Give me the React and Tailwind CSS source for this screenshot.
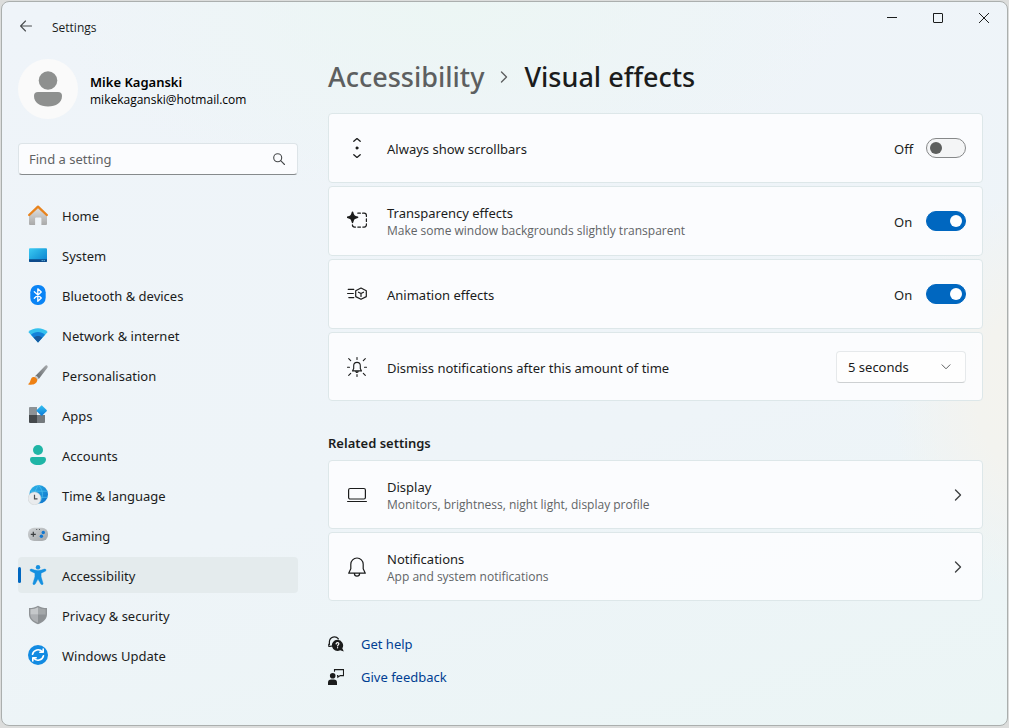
import {useState} from 'react';

const stroke = {
  fill: 'none',
  stroke: 'currentColor',
  strokeLinecap: 'round',
  strokeLinejoin: 'round',
};

// Sidebar icons
function HomeIcon() {
  return (
    <svg viewBox="0 0 20 20" className="size-5">
      <defs>
        <linearGradient id="home-wall" x1="0" y1="0" x2="0" y2="1">
          <stop offset="0" stopColor="#e3e3e3" />
          <stop offset="1" stopColor="#a9a9a9" />
        </linearGradient>
      </defs>
      <path d="M1 9.5 10 1.5l9 8V19a1 1 0 0 1-1 1h-4.600v-6.400a1 1 0 0 0-1-1H8.100a1 1 0 0 0-1 1V20H2a1 1 0 0 1-1-1z" fill="url(#home-wall)" />
      <path d="M1.200 10 10 1.600l8.800 8.400" fill="none" stroke="#e8831d" strokeWidth="2.300" strokeLinecap="round" strokeLinejoin="round" />
    </svg>
  );
}

function SystemIcon() {
  return (
    <svg viewBox="0 0 20 20" className="size-5">
      <defs>
        <linearGradient id="sys-screen" x1="0" y1="0" x2="1" y2="1">
          <stop offset="0" stopColor="#3ccbf4" />
          <stop offset=".5" stopColor="#20a5df" />
          <stop offset="1" stopColor="#0a7fd0" />
        </linearGradient>
      </defs>
      <rect x="1" y="3.200" width="18" height="13.800" rx="1" fill="url(#sys-screen)" />
      <path d="M1 14.300h18V16a1 1 0 0 1-1 1H2a1 1 0 0 1-1-1z" fill="#0d4a8a" />
      <path d="M13.700 15.600h1M15.700 15.600h1" stroke="#7fd3f7" strokeWidth="1" />
    </svg>
  );
}

function BluetoothIcon() {
  return (
    <svg viewBox="0 0 20 20" className="size-5">
      <rect x="2.300" y="0" width="15.400" height="20" rx="7.200" fill="#0a84f5" />
      <path d="m6.300 6.700 7 6.400-3.500 3.100V3.800l3.500 3.100-7 6.400" fill="none" stroke="#fff" strokeWidth="1.300" strokeLinejoin="round" strokeLinecap="round" />
    </svg>
  );
}

function NetworkIcon() {
  return (
    <svg viewBox="0 0 20 20" className="size-5">
      <path d="M10 17.400.300 6.900C3 4.400 6.300 3.200 10 3.200s7 1.200 9.700 3.700z" fill="#35c1ee" />
      <path d="M10 17.400 3 9.800c2-1.800 4.300-2.700 7-2.700s5 .900 7 2.700z" fill="#1480d8" />
      <path d="m10 17.400-4.400-4.800c1.300-1.100 2.700-1.600 4.400-1.600s3.100.500 4.400 1.600z" fill="#175a9e" />
    </svg>
  );
}

function BrushIcon() {
  return (
    <svg viewBox="0 0 20 20" className="size-5">
      <defs>
        <linearGradient id="brush-handle" x1="1" y1="0" x2="0" y2="1">
          <stop offset="0" stopColor="#a7aaad" />
          <stop offset="1" stopColor="#5f6468" />
        </linearGradient>
      </defs>
      <path d="M19.300.700c.6.600.5 1.300.1 2L10.800 14 7 11.200 17 .900c.7-.7 1.700-.8 2.300-.2z" fill="url(#brush-handle)" />
      <path d="M7.600 10.800c1.400.3 2.600 1.300 3.100 2.700l-1.500 1.900-3.500-2.700z" fill="#c9cccf" />
      <path d="M4.500 12.200c1.900-1.100 5 .8 4.700 3.400C8.900 18.500 5.200 20.600.5 19.500c-.4-.1-.4-.5 0-.7 2.100-.9 1.600-5.300 4-6.600z" fill="#ee8013" />
    </svg>
  );
}

function AppsIcon() {
  return (
    <svg viewBox="0 0 20 20" className="size-5">
      <defs>
        <linearGradient id="apps-tile" x1="0" y1="0" x2="1" y2="1">
          <stop offset="0" stopColor="#35c1f1" />
          <stop offset="1" stopColor="#0a78d8" />
        </linearGradient>
      </defs>
      <path d="M2 2h7v8H1V3a1 1 0 0 1 1-1z" fill="#8d9296" />
      <path d="M1 10h8v8H2a1 1 0 0 1-1-1z" fill="#45494c" />
      <path d="M9 10h8v7a1 1 0 0 1-1 1H9z" fill="#74797d" />
      <rect x="9.800" y="1.700" width="7.800" height="7.800" rx=".8" transform="rotate(45 13.700 5.600)" fill="url(#apps-tile)" />
    </svg>
  );
}

function AccountsIcon() {
  return (
    <svg viewBox="0 0 20 20" className="size-5">
      <circle cx="10" cy="5" r="5" fill="#1fb5a6" />
      <path d="M4.200 12h11.600A2.200 2.200 0 0 1 18 14.200c0 3.600-3.600 5.800-8 5.800s-8-2.200-8-5.800A2.200 2.200 0 0 1 4.200 12z" fill="#1fb5a6" />
    </svg>
  );
}

function TimeIcon() {
  return (
    <svg viewBox="0 0 20 20" className="size-5">
      <defs>
        <linearGradient id="time-globe" x1="0" y1="0" x2="1" y2="1">
          <stop offset="0" stopColor="#2fb8ea" />
          <stop offset="1" stopColor="#0b6fc9" />
        </linearGradient>
      </defs>
      <circle cx="10.700" cy="9.300" r="9.300" fill="url(#time-globe)" />
      <path d="M3 6.200h16M3 12.300h16.500M10.700.3c-5 5.500-5 12.500 0 18M10.700.3c5 5.500 5 12.500 0 18" fill="none" stroke="#4fc3ef" strokeWidth=".7" />
      <circle cx="6.500" cy="13.400" r="6.400" fill="#e9ebed" stroke="#c3c7ca" strokeWidth=".4" />
      <path d="M6.500 9.800v4h3" fill="none" stroke="#4d5154" strokeWidth="1.200" />
    </svg>
  );
}

function GamingIcon() {
  return (
    <svg viewBox="0 0 20 20" className="size-5">
      <defs>
        <linearGradient id="pad-body" x1="0" y1="0" x2="1" y2="1">
          <stop offset="0" stopColor="#cfd2d4" />
          <stop offset="1" stopColor="#a1a5a8" />
        </linearGradient>
      </defs>
      <rect x="0" y="2.700" width="20" height="13.300" rx="6" fill="url(#pad-body)" />
      <path d="M2.800 9.300h5M5.300 6.800v5" stroke="#3b3e40" strokeWidth="1.200" />
      <path d="M8.200 4.500h1M11 4.500h1" stroke="#55595c" strokeWidth="1" />
      <circle cx="15.300" cy="7.500" r="1.700" fill="#1177d1" />
      <circle cx="13.400" cy="11.300" r="1.700" fill="#1177d1" />
    </svg>
  );
}

function AccessibilityIcon() {
  return (
    <svg viewBox="0 0 20 20" className="size-5">
      <circle cx="10" cy="2.200" r="2.200" fill="#1590e0" />
      <path d="M2.600 4.100c-.8.5-.8 1.700.1 2.100l4.200 2v3.600l-2 6.600c-.3 1.200 1.600 2.100 2.300.7L10 14l2.800 5.100c.7 1.400 2.600.5 2.300-.7l-2-6.600V8.200l4.200-2c.9-.4.9-1.600.1-2.100-.3-.2-.8-.2-1.200 0-1.900.9-4 1.300-6.200 1.300s-4.300-.4-6.200-1.300c-.4-.2-.9-.2-1.200 0z" fill="#1590e0" stroke="#1590e0" strokeWidth=".4" />
    </svg>
  );
}

function ShieldIcon() {
  return (
    <svg viewBox="0 0 20 20" className="size-5">
      <path d="M10 .7c2.500 1.700 5.500 2.400 9 2.400v6.200c0 4.900-3.700 8-9 9.900-5.300-1.900-9-5-9-9.900V3.100c3.500 0 6.500-.7 9-2.400z" fill="#8f9396" />
      <path d="M10 2.300c2.200 1.300 4.700 1.900 7.600 2v5.500H10z" fill="#a3a7a9" />
      <path d="M10 2.300v7.500H2.400V4.300c2.900-.1 5.400-.7 7.600-2z" fill="#c5c8ca" />
      <path d="M2.400 9.800H10v7.900c-4.600-1.700-7.400-4.200-7.600-7.900z" fill="#adb0b3" />
      <path d="M10 9.800h7.600c-.2 3.700-3 6.200-7.600 7.900z" fill="#8d9194" />
    </svg>
  );
}

function UpdateIcon() {
  return (
    <svg viewBox="0 0 20 20" className="size-5">
      <circle cx="10" cy="10" r="10" fill="#128be2" />
      <g fill="none" stroke="#fff" strokeWidth="1.600" strokeLinecap="round" strokeLinejoin="round">
        <path d="M4.500 9.200a5.700 5.700 0 0 1 10-2.300M15.200 4v3.300h-3.400" />
        <path d="M15.500 10.800a5.700 5.700 0 0 1-10 2.300M4.800 16v-3.300h3.400" />
      </g>
    </svg>
  );
}

// Card icons
function ScrollbarsIcon() {
  return (
    <svg viewBox="0 0 20 20" className="size-5" {...stroke} strokeWidth="1.300">
      <path d="M6.800 3.300 10 .6l3.200 2.700M6.800 16.700l3.200 2.700 3.200-2.700" />
      <circle cx="10" cy="10" r="1.200" fill="currentColor" strokeWidth=".6" />
    </svg>
  );
}

function TransparencyIcon() {
  return (
    <svg viewBox="0 0 20 20" className="size-5">
      <path d="M5.500 1.200c.9 3.600 1.500 4.200 5.100 5.100-3.600.9-4.200 1.500-5.100 5.100-.9-3.600-1.500-4.200-5.100-5.100 3.600-.9 4.200-1.500 5.100-5.100z" fill="currentColor" stroke="currentColor" strokeWidth="1.500" strokeLinejoin="round" />
      <path d="M10.800 2.200h2.600M15.600 2.200h1.600a2.300 2.300 0 0 1 2.200 2.300v1M19.400 7.800v2.600M19.400 12.800v1a2.300 2.300 0 0 1-2.200 2.300h-1.400M13.500 16.100h-2.700M8.500 16.100h-.9a2.300 2.300 0 0 1-2.200-2.200" {...stroke} strokeWidth="1.200" />
    </svg>
  );
}

function AnimationIcon() {
  return (
    <svg viewBox="0 0 20 20" className="size-5" {...stroke} strokeWidth="1.200">
      <path d="M1.200 5.300h5.600M.6 9.500h5.700M1.800 13.600h5" />
      <path d="m14 4 5.300 2.700v5.900L14 15.300l-5.300-2.700V6.700z" />
      <path d="M11.500 8.200 14 9.500l2.500-1.300M14 9.500v3" />
    </svg>
  );
}

function DismissIcon() {
  return (
    <svg viewBox="0 0 20 20" className="size-5" {...stroke} strokeWidth="1.100">
      <path d="M10 .5v2M10 17.500v2M.5 10.200h2M17.500 10.200h2M1.700 1.600l2 2M18.300 1.600l-2 2M1.700 18.300l2-2M18.300 18.300l-2-2" />
      <path d="M10 5.400a3.300 3.300 0 0 0-3.300 3.300v2.800l-1.200 2.400h9l-1.200-2.400V8.700A3.300 3.300 0 0 0 10 5.400zM8.800 14.200a1.200 1.200 0 0 0 2.400 0" />
    </svg>
  );
}

function DisplayIcon() {
  return (
    <svg viewBox="0 0 20 20" className="size-5" {...stroke} strokeWidth="1.200">
      <rect x="1.600" y="3.500" width="16.800" height="10.500" rx="1.500" />
      <path d="M.6 16.500h18.800" />
    </svg>
  );
}

function BellIcon() {
  return (
    <svg viewBox="0 0 20 20" className="size-5" {...stroke} strokeWidth="1.200">
      <path d="M10 1a6.200 6.200 0 0 0-6.200 6.200v4.600l-2.100 4.400h16.600l-2.100-4.400V7.200A6.200 6.200 0 0 0 10 1zM7.400 16.500a2.600 2.600 0 0 0 5.200 0" />
    </svg>
  );
}

function ChevronRight({className}) {
  return (
    <svg viewBox="0 0 8 12" className={className} {...stroke} strokeWidth="1.400">
      <path d="m1.500 1 5 5-5 5" />
    </svg>
  );
}

// Footer link icons
function HelpIcon() {
  return (
    <svg viewBox="0 0 16 16" className="size-4">
      <path d="M1.400 8.500V5.500a5 5 0 0 1 9-2.600M.8 8v2.300M1.200 10.500l2.300-.4" {...stroke} strokeWidth="1.200" />
      <path d="M9.500 3.800a5.600 5.600 0 0 1 4.800 8.500l1.500 3.300-3.600-1.300a5.600 5.600 0 1 1-2.700-10.500z" fill="currentColor" />
      <path d="M8.100 7.900c.1-1.800 2.800-1.700 2.800-.1 0 1-1.300 1.100-1.300 2.200M9.600 11.500v.3" fill="none" stroke="#fff" strokeWidth="1.200" strokeLinecap="round" />
    </svg>
  );
}

function FeedbackIcon() {
  return (
    <svg viewBox="0 0 16 16" className="size-4">
      <circle cx="4.700" cy="6.700" r="2.800" fill="currentColor" />
      <path d="M0 16v-2.400a3.200 3.200 0 0 1 3.200-3.200h2.600A3.200 3.200 0 0 1 9 13.600V16z" fill="currentColor" />
      <path d="M6.500 2.800V.6h9v6h-3.300L9.800 8.300V6.600H9" fill="none" stroke="currentColor" strokeWidth="1.100" />
    </svg>
  );
}

const navItems = [
  {label: 'Home', icon: HomeIcon},
  {label: 'System', icon: SystemIcon},
  {label: 'Bluetooth & devices', icon: BluetoothIcon},
  {label: 'Network & internet', icon: NetworkIcon},
  {label: 'Personalisation', icon: BrushIcon},
  {label: 'Apps', icon: AppsIcon},
  {label: 'Accounts', icon: AccountsIcon},
  {label: 'Time & language', icon: TimeIcon},
  {label: 'Gaming', icon: GamingIcon},
  {label: 'Accessibility', icon: AccessibilityIcon},
  {label: 'Privacy & security', icon: ShieldIcon},
  {label: 'Windows Update', icon: UpdateIcon},
];

function TitleBar() {
  return (
    <header className="flex justify-between">
      <div className="flex items-center gap-5 pl-[18px] pt-4">
        <button type="button" aria-label="Back" className="pb-1 text-[#4a4d4f]">
          <svg viewBox="0 0 12 12" className="size-3" {...stroke} strokeWidth="1.100">
            <path d="M11.500 6H.7M5.500 1 .6 6l4.900 5" />
          </svg>
        </button>
        <span className="font-['Open_Sans',sans-serif] text-xs leading-5">Settings</span>
      </div>
      <div className="flex h-8">
        <button type="button" aria-label="Minimise" className="flex w-[46px] items-center justify-center">
          <svg viewBox="0 0 10 10" className="size-2.5">
            <path d="M0 4.500h10" stroke="currentColor" />
          </svg>
        </button>
        <button type="button" aria-label="Maximise" className="flex w-[46px] items-center justify-center">
          <svg viewBox="0 0 10 10" className="size-2.5" {...stroke}>
            <rect x=".5" y=".5" width="9" height="9" rx=".5" />
          </svg>
        </button>
        <button type="button" aria-label="Close" className="flex w-[46px] items-center justify-center">
          <svg viewBox="0 0 10 10" className="size-2.5" {...stroke}>
            <path d="m.3.3 9.400 9.400M9.700.3.3 9.700" />
          </svg>
        </button>
      </div>
    </header>
  );
}

function Sidebar() {
  return (
    <aside className="w-[280px] shrink-0">
      <div className="flex items-center gap-3">
        <div className="size-[60px] rounded-full bg-[#fafafa] text-[#8e908f]">
          <svg viewBox="0 0 60 60" className="size-full" fill="currentColor">
            <circle cx="30" cy="21.500" r="9.300" />
            <path d="M20 33h20a4 4 0 0 1 4 4c0 6.800-6 10.500-14 10.500S16 43.800 16 37a4 4 0 0 1 4-4z" />
          </svg>
        </div>
        <div className="pt-1 text-black">
          <p className="text-[13px] leading-[18px] font-semibold">Mike Kaganski</p>
          <p className="font-['Open_Sans',sans-serif] text-xs leading-[18px]">mikekaganski@hotmail.com</p>
        </div>
      </div>

      <div className="relative mt-6">
        <input
          type="search"
          aria-label="Find a setting"
          placeholder="Find a setting"
          className="h-8 w-full rounded border border-[#dde4e8] border-b-[#868a8c] bg-[#fbfcfe] pr-9 pl-2.5 text-[13px] placeholder:text-[#5f6264] outline-none"
        />
        <svg viewBox="0 0 12 12" className="absolute top-2.5 right-[13px] size-3 text-[#45484a]" {...stroke} strokeWidth="1.100">
          <circle cx="4.700" cy="4.700" r="4" />
          <path d="m7.700 7.700 3.800 3.800" />
        </svg>
      </div>

      <nav className="mt-[22px] flex flex-col gap-1">
        {navItems.map(({label, icon: Icon}) => {
          const active = label === 'Accessibility';
          return (
            <a
              key={label}
              href="#"
              aria-current={active ? 'page' : undefined}
              className={`relative flex h-9 items-center gap-3.5 rounded pl-2.5 text-[13px] ${active ? 'bg-[#e4ebed]' : ''}`}
            >
              {active && <span className="absolute top-2.5 left-0 h-4 w-[3px] rounded-full bg-[#0067c0]" />}
              <Icon />
              <span className="pt-1">{label}</span>
            </a>
          );
        })}
      </nav>
    </aside>
  );
}

function Card({icon: Icon, title, text, htmlFor, children}) {
  return (
    <div className="flex min-h-[69px] items-center gap-5 rounded border border-[#dde7e9] bg-[#fdfdff]/85 pr-4 pl-[18px]">
      <Icon />
      <div className="min-w-0 flex-1 pt-0.5">
        {htmlFor ? (
          <label htmlFor={htmlFor} className="block text-[13px] leading-[18px]">{title}</label>
        ) : (
          <p className="text-[13px] leading-[18px]">{title}</p>
        )}
        {text && <p className="font-['Open_Sans',sans-serif] text-xs leading-[18px] text-[#616466]">{text}</p>}
      </div>
      {children}
    </div>
  );
}

function ToggleCard({id, icon, title, text, initial = false}) {
  const [on, setOn] = useState(initial);

  return (
    <Card icon={icon} title={title} text={text} htmlFor={id}>
      <div className="flex h-[68px] items-center">
        <span className="w-8 pt-1 text-[13px]">{on ? 'On' : 'Off'}</span>
        <input
          id={id}
          type="checkbox"
          role="switch"
          checked={on}
          onChange={(e) => setOn(e.target.checked)}
          className="flex h-5 w-10 appearance-none items-center rounded-full border border-[#868889] bg-[#f4f5f6] px-[3px] before:size-3 before:rounded-full before:bg-[#5d5f5e] checked:justify-end checked:border-[#0067c0] checked:bg-[#0067c0] checked:before:bg-white"
        />
      </div>
    </Card>
  );
}

function LinkCard({icon, title, text}) {
  return (
    <a href="#" className="block">
      <Card icon={icon} title={title} text={text}>
        <ChevronRight className="h-3 w-4 text-[#3f4143]" />
      </Card>
    </a>
  );
}

function VisualEffects() {
  return (
    <main className="min-w-0 flex-1">
      <h1 className="flex items-center gap-4 text-[27px] leading-9 font-medium">
        <a href="#" className="text-[#5d5f60]">Accessibility</a>
        <ChevronRight className="h-3 w-2 text-[#5d5f60]" />
        <span>Visual effects</span>
      </h1>

      <div className="mt-[18px] flex flex-col gap-[3px]">
        <ToggleCard id="scrollbars" icon={ScrollbarsIcon} title="Always show scrollbars" />
        <ToggleCard
          id="transparency"
          icon={TransparencyIcon}
          title="Transparency effects"
          text="Make some window backgrounds slightly transparent"
          initial
        />
        <ToggleCard id="animation" icon={AnimationIcon} title="Animation effects" initial />
        <Card icon={DismissIcon} title="Dismiss notifications after this amount of time" htmlFor="dismiss">
          <div className="relative">
            <select
              id="dismiss"
              defaultValue="5"
              className="h-8 w-[130px] appearance-none rounded border border-[#e6e9eb] border-b-[#cdd0d2] bg-[#fefefe] pt-0.5 pl-[11px] text-[13px]"
            >
              <option value="5">5 seconds</option>
              <option value="7">7 seconds</option>
              <option value="15">15 seconds</option>
              <option value="30">30 seconds</option>
              <option value="60">1 minute</option>
              <option value="300">5 minutes</option>
            </select>
            <svg viewBox="0 0 10 6" className="pointer-events-none absolute top-[13px] right-[15px] h-1.5 w-2.5 text-[#5d5f60]" {...stroke}>
              <path d="m1 .8 4 4 4-4" />
            </svg>
          </div>
        </Card>
      </div>

      <h2 className="mt-[33px] text-[13px] leading-[18px] font-semibold">Related settings</h2>
      <div className="mt-2 flex flex-col gap-[3px]">
        <LinkCard icon={DisplayIcon} title="Display" text="Monitors, brightness, night light, display profile" />
        <LinkCard icon={BellIcon} title="Notifications" text="App and system notifications" />
      </div>

      <div className="mt-[33px] flex flex-col items-start gap-[13px] text-[13px] leading-5">
        <a href="#" className="flex items-center gap-[17px]">
          <HelpIcon />
          <span className="text-[#003e92]">Get help</span>
        </a>
        <a href="#" className="flex items-center gap-[17px]">
          <FeedbackIcon />
          <span className="text-[#003e92]">Give feedback</span>
        </a>
      </div>
    </main>
  );
}

export default function App() {
  return (
    <div className="flex min-h-screen bg-[#dcdddc] p-px pb-0.5 font-['Noto_Sans','Open_Sans',sans-serif] text-[#1b1c1c]">
      <div className="flex flex-1 flex-col rounded-lg border border-[#abafae] bg-[#edf4f7] bg-[radial-gradient(ellipse_140px_200px_at_1030px_390px,#f4f3ee_0%,#f3f3ef_40%,#f3f3ef00_100%),radial-gradient(ellipse_400px_200px_at_450px_0px,#ecf6f4,#ecf6f400),linear-gradient(165deg,#eff4f9_0%,#eef4f8_60%,#ebf5f5_100%)]">
        <TitleBar />
        <div className="flex gap-[30px] pt-[21px] pr-6 pb-6 pl-4">
          <Sidebar />
          <VisualEffects />
        </div>
      </div>
    </div>
  );
}
